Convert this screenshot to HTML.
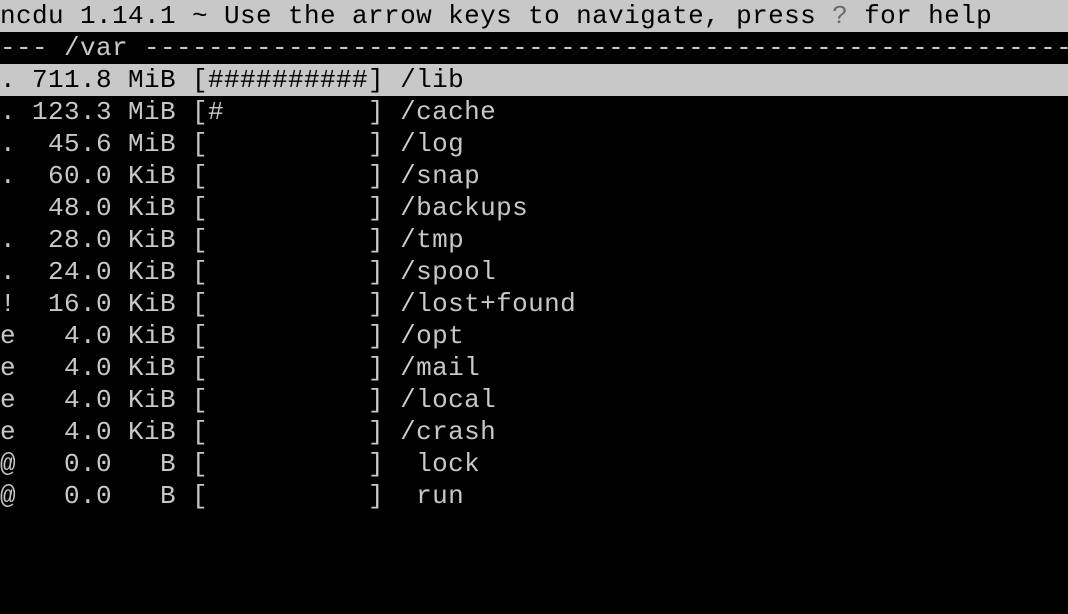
<!DOCTYPE html>
<html><head><meta charset="utf-8"><style>
html,body{margin:0;padding:0;background:#000;width:1068px;height:614px;overflow:hidden}
pre{margin:0;font-family:"Liberation Mono",monospace;font-size:26px;letter-spacing:0.4px;line-height:32px;color:#c8c8c8;white-space:pre}
.r{display:block;height:32px;overflow:hidden;width:1068px}
.hl{background:#c8c8c8;color:#000}
.q{color:#6a6a6a}
</style></head><body><pre><span class="r hl">ncdu 1.14.1 ~ Use the arrow keys to navigate, press <span class="q">?</span> for help</span><span class="r">--- /var ----------------------------------------------------------------------</span><span class="r hl">. 711.8 MiB [##########] /lib</span><span class="r">. 123.3 MiB [#         ] /cache</span><span class="r">.  45.6 MiB [          ] /log</span><span class="r">.  60.0 KiB [          ] /snap</span><span class="r">   48.0 KiB [          ] /backups</span><span class="r">.  28.0 KiB [          ] /tmp</span><span class="r">.  24.0 KiB [          ] /spool</span><span class="r">!  16.0 KiB [          ] /lost+found</span><span class="r">e   4.0 KiB [          ] /opt</span><span class="r">e   4.0 KiB [          ] /mail</span><span class="r">e   4.0 KiB [          ] /local</span><span class="r">e   4.0 KiB [          ] /crash</span><span class="r">@   0.0   B [          ]  lock</span><span class="r">@   0.0   B [          ]  run</span></pre></body></html>
